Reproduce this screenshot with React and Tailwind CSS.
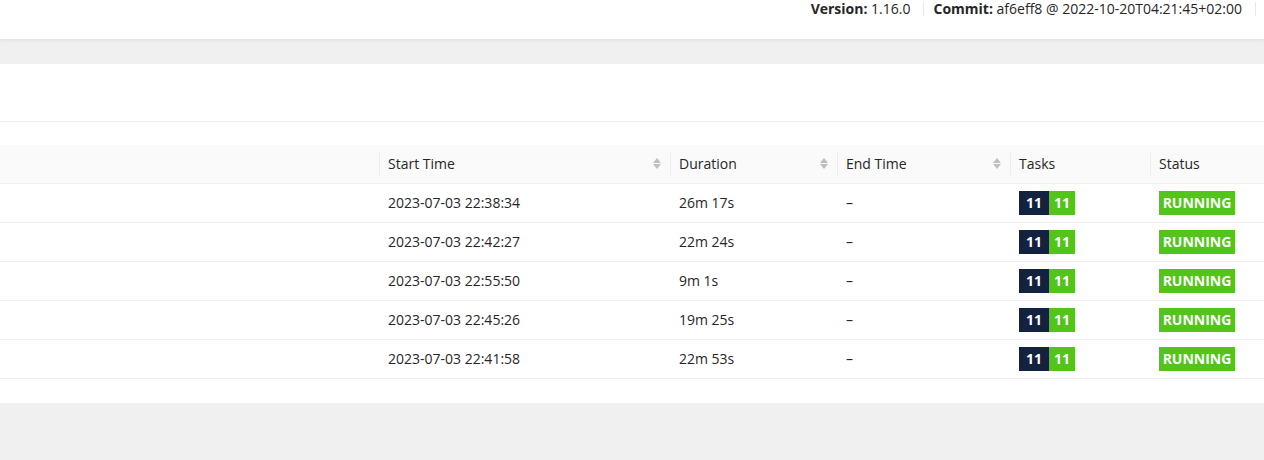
import React from "react";

const rows = [
  { start: "2023-07-03 22:38:34", duration: "26m 17s" },
  { start: "2023-07-03 22:42:27", duration: "22m 24s" },
  { start: "2023-07-03 22:55:50", duration: "9m 1s" },
  { start: "2023-07-03 22:45:26", duration: "19m 25s" },
  { start: "2023-07-03 22:41:58", duration: "22m 53s" },
];

const SortIcon = () => (
  <span className="flex flex-col items-center gap-[1px] text-[#bfbfbf]">
    <svg width="8" height="5" viewBox="0 0 8 5">
      <path d="M4 0L8 5H0z" fill="currentColor" />
    </svg>
    <svg width="8" height="5" viewBox="0 0 8 5">
      <path d="M0 0h8L4 5z" fill="currentColor" />
    </svg>
  </span>
);

const Th = ({ label, sortable, first }) => (
  <th className="relative h-[38px] px-[9px] text-left font-semibold text-[#262626] border-b border-[#f0f0f0]">
    {!first && (
      <span className="absolute left-0 top-[8px] h-[22px] w-px bg-[#ececec]" />
    )}
    <div className="flex items-center justify-between font-normal">
      <span>{label}</span>
      {sortable && <SortIcon />}
    </div>
  </th>
);

export default function App() {
  return (
    <div
      className="w-[1264px] h-[460px] bg-[#f0f0f0] overflow-hidden text-[14px] text-[#262626]"
      style={{ fontFamily: '"Open Sans", "Noto Sans", sans-serif' }}
    >
      <div className="h-[39px] bg-white shadow-[0_1px_4px_rgba(0,0,0,0.08)] flex justify-end items-start pr-[8px]">
        <div className="flex items-center h-[17px] leading-[17px]">
          <span>
            <b className="font-bold">Version:</b> 1.16.0
          </span>
          <span className="mx-[9px] ml-[13px] h-[14px] w-px bg-[#e8e8e8]" />
          <span>
            <b className="font-bold">Commit:</b> af6eff8 @ 2022-10-20T04:21:45+02:00
          </span>
          <span className="ml-[13px] h-[14px] w-px bg-[#e8e8e8]" />
        </div>
      </div>

      <div className="mt-[25px] bg-white h-[339px]">
        <div className="h-[58px] border-b border-[#f0f0f0]" />
        <div className="pt-[23px]">
          <table className="w-full border-collapse table-fixed">
            <colgroup>
              <col className="w-[379px]" />
              <col className="w-[291px]" />
              <col className="w-[167px]" />
              <col className="w-[173px]" />
              <col className="w-[140px]" />
              <col className="w-[114px]" />
            </colgroup>
            <thead className="bg-[#fafafa]">
              <tr>
                <Th label="" first />
                <Th label="Start Time" sortable />
                <Th label="Duration" sortable />
                <Th label="End Time" sortable />
                <Th label="Tasks" />
                <Th label="Status" />
              </tr>
            </thead>
            <tbody>
              {rows.map((r) => (
                <tr key={r.start} className="h-[39px] border-b border-[#f0f0f0]">
                  <td />
                  <td className="px-[9px]">{r.start}</td>
                  <td className="px-[9px]">{r.duration}</td>
                  <td className="px-[9px]">–</td>
                  <td className="px-[9px]">
                    <div className="flex h-[24px] text-white font-bold">
                      <span className="w-[30px] bg-[#13233f] flex items-center justify-center">
                        11
                      </span>
                      <span className="w-[26px] bg-[#52c41a] flex items-center justify-center">
                        11
                      </span>
                    </div>
                  </td>
                  <td className="px-[9px]">
                    <span className="inline-flex h-[24px] w-[76px] items-center justify-center bg-[#52c41a] text-white font-bold">
                      RUNNING
                    </span>
                  </td>
                </tr>
              ))}
            </tbody>
          </table>
        </div>
      </div>
    </div>
  );
}
